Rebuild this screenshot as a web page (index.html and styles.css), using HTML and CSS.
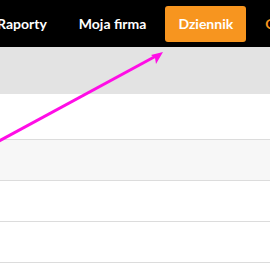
FILE: index.html
```html
<!DOCTYPE html>
<html lang="pl">
<head>
  <meta charset="UTF-8">
  <title>Dziennik</title>
  <link rel="stylesheet" href="styles.css">
</head>
<body>
  <nav class="topbar">
    <ul class="menu">
      <li class="menu-item">Raporty</li>
      <li class="menu-item">Moja firma</li>
      <li class="menu-item active">Dziennik</li>
      <li class="menu-item accent">Oferty</li>
    </ul>
  </nav>
  <div class="subbar"></div>
  <div class="table">
    <div class="row first"></div>
    <div class="row striped"></div>
    <div class="row"></div>
    <div class="row"></div>
  </div>
  <!-- strzałka wskazująca zakładkę -->
  <svg class="pointer" width="270" height="264" viewBox="0 0 270 264">
    <line x1="-10" y1="146" x2="156" y2="56" stroke="#ff0de6" stroke-width="3"/>
    <polygon points="163,52 151,55 155,58 156,64" fill="#ff0de6"/>
  </svg>
</body>
</html>
```

FILE: styles.css
```css
body {
  margin: 0;
  background: #fff;
  font-family: Lato, "Open Sans", sans-serif;
  overflow: hidden;
  position: relative;
}
.topbar {
  height: 47px;
  background: #000;
  display: flex;
  align-items: center;
  overflow: hidden;
}
.menu {
  list-style: none;
  margin: 0 0 0 -16px;
  padding: 0;
  display: flex;
  gap: 6px;
  white-space: nowrap;
}
.menu-item {
  color: #fff;
  font-weight: 700;
  font-size: 14px;
  padding: 0 13px;
  height: 36px;
  line-height: 36px;
  border-radius: 3px;
}
.menu-item.active {
  background: #f7951f;
}
.menu-item.accent {
  color: #f7951f;
}
.subbar {
  height: 47px;
  background: #e3e3e3;
}
.row {
  height: 40px;
  border-bottom: 1px solid #dcdcdc;
}
.row.first {
  height: 45px;
}
.row.striped {
  background: #f7f7f7;
}
.pointer {
  position: absolute;
  left: 0;
  top: 0;
  pointer-events: none;
}
```
